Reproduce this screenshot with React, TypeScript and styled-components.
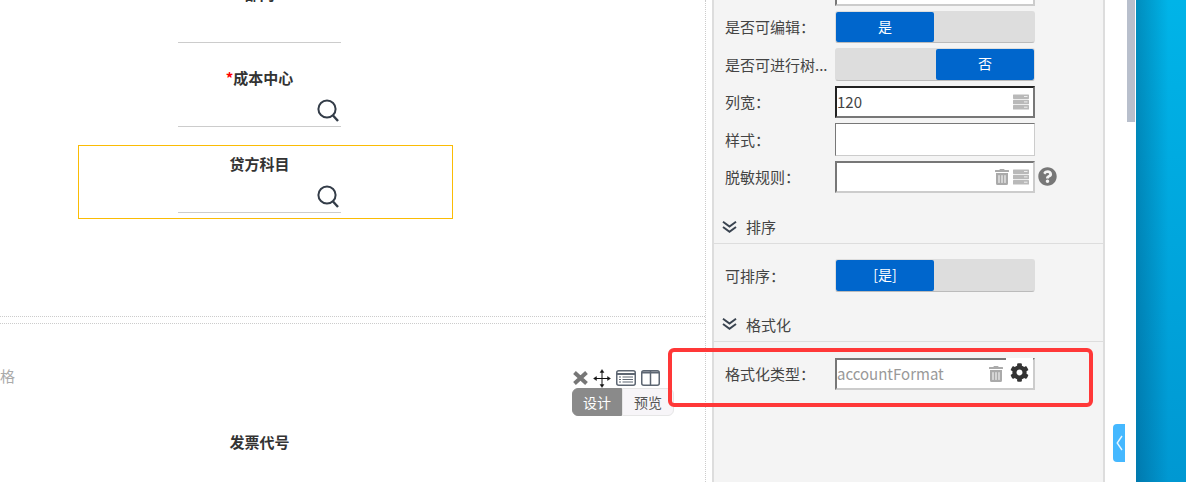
import React from "react";
import styled, { createGlobalStyle } from "styled-components";
import { FaCog, FaQuestionCircle, FaTrashAlt } from "react-icons/fa";

const GlobalStyle = createGlobalStyle`
  html, body { margin: 0; padding: 0; background: #fff; }
  body { font-family: "Noto Sans CJK SC", "Noto Sans", sans-serif; font-size: 15px; color: #444; }
`;

const Page = styled.div`
  position: relative;
  display: flex;
  width: 1186px;
  height: 482px;
  overflow: hidden;
`;

/* left: form canvas */
const Canvas = styled.div`
  width: 706px;
  flex: none;
  box-sizing: border-box;
  border-right: 1px dotted #ccc;
  margin-right: 6px;
`;

const FieldList = styled.div<{ $top: number }>`
  margin-top: ${(p) => p.$top}px;
  margin-left: 78px;
  width: 375px;
  & > :first-child { margin-top: 0; }
`;

const Field = styled.div<{ $selected?: boolean }>`
  box-sizing: border-box;
  height: ${(p) => (p.$selected ? 74 : 73)}px;
  margin-top: ${(p) => (p.$selected ? 13 : 11)}px;
  padding: 8px 111px 0 99px;
  border: 1px solid ${(p) => (p.$selected ? "#fbbc05" : "transparent")};
`;

const FieldLabel = styled.div`
  height: 20px;
  line-height: 20px;
  text-align: center;
  font-weight: 700;
  color: #333;
  white-space: nowrap;
`;

const Star = styled.span`
  color: #f00;
`;

const LineInput = styled.div`
  box-sizing: border-box;
  height: 39px;
  display: flex;
  align-items: flex-end;
  justify-content: flex-end;
  padding: 0 2px 4px 0;
  border-bottom: 1px solid #ccc;
`;

const Dividers = styled.div`
  height: 6px;
  margin-top: 97px;
  border-top: 1px dotted #ccc;
  border-bottom: 1px dotted #ccc;
`;

const DesignRow = styled.div`
  display: flex;
  justify-content: space-between;
  margin-top: 44px;
  padding-right: 31px;
`;

const CutText = styled.div`
  margin-top: -2px;
  height: 20px;
  line-height: 20px;
  color: #aaa;
`;

const DesignTools = styled.div`
  width: 102px;
`;

const IconRow = styled.div`
  display: flex;
  align-items: center;
  justify-content: space-between;
  height: 20px;
  margin: 0 14px 0 1px;
`;

const Tabs = styled.div`
  display: flex;
  height: 28px;
`;

const Tab = styled.div<{ $active?: boolean }>`
  box-sizing: border-box;
  flex: ${(p) => (p.$active ? "0 0 50px" : "1")};
  line-height: 27px;
  text-align: center;
  font-size: 14px;
  color: ${(p) => (p.$active ? "#fff" : "#555")};
  background: ${(p) => (p.$active ? "#8a8a8a" : "#f7f5f8")};
  border: 1px solid ${(p) => (p.$active ? "#8a8a8a" : "#e6e6e6")};
  border-radius: ${(p) => (p.$active ? "6px 0 0 6px" : "0 6px 6px 0")};
`;

/* middle: properties panel */
const Panel = styled.div`
  width: 393px;
  flex: none;
  box-sizing: border-box;
  height: 482px;
  background: #f4f4f4;
  border-left: 2px solid #ddd;
  border-right: 2px solid #ddd;
  padding-top: 1px;
`;

const Rows = styled.div<{ $top: number }>`
  display: flex;
  flex-direction: column;
  gap: 5px;
  margin-top: ${(p) => p.$top}px;
`;

const Row = styled.div`
  display: flex;
  align-items: center;
  height: 32.5px;
  padding-left: 11px;
`;

const RowLabel = styled.div`
  width: 110px;
  flex: none;
  white-space: nowrap;
  overflow: hidden;
  color: #444;
`;

const Toggle = styled.div`
  box-sizing: border-box;
  display: flex;
  gap: 2px;
  width: 200px;
  height: 32.5px;
  background: #ddd;
  border: 1px solid #ddd;
  border-bottom-color: #bbb;
  border-radius: 3px;
`;

const ToggleSide = styled.div<{ $on?: boolean }>`
  flex: 1;
  line-height: 29px;
  text-align: center;
  color: #fff;
  font-size: 14px;
  background: ${(p) => (p.$on ? "#0066cc" : "transparent")};
  border-radius: 2px;
`;

const InputBox = styled.div<{ $tone?: "inset" | "focus" | "thin" }>`
  box-sizing: border-box;
  display: flex;
  align-items: center;
  gap: 3px;
  width: 200px;
  height: 32.5px;
  padding: 0 4px 0 0;
  background: #fff;
  border-style: solid;
  border-width: ${(p) => (p.$tone === "thin" ? "1px" : "2px")};
  border-color: ${(p) =>
    p.$tone === "focus" ? "#222 #777 #777 #222" : "#777 #ccc #ccc #777"};
`;

const InputText = styled.div<{ $muted?: boolean }>`
  flex: 1;
  line-height: 24px;
  color: ${(p) => (p.$muted ? "#999" : "#444")};
`;

const GearButton = styled.div`
  display: flex;
  align-items: center;
  justify-content: center;
  flex: none;
  width: 27px;
  height: 30px;
  margin: -2px -4px 0 -1px;
  background: #fff;
  color: #333;
`;

const TrashWrap = styled.span`
  display: inline-flex;
  color: #aaa;
`;

const HelpWrap = styled.span`
  display: inline-flex;
  margin-left: 3px;
  color: #777;
`;

const SectionHeader = styled.div<{ $top: number }>`
  display: flex;
  align-items: center;
  gap: 9px;
  height: 34px;
  box-sizing: border-box;
  margin-top: ${(p) => p.$top}px;
  padding-left: 8px;
  border-bottom: 1px solid #ddd;
  color: #444;
`;

/* right: gutter and blue strip */
const Gutter = styled.div`
  position: relative;
  width: 31px;
  flex: none;
  background: #fff;
`;

const ScrollThumb = styled.div`
  position: absolute;
  top: 0;
  left: 22px;
  width: 8px;
  height: 122px;
  background: #b8bfcc;
`;

const CollapseTab = styled.div`
  position: absolute;
  top: 424px;
  left: 8px;
  width: 12px;
  height: 38px;
  display: flex;
  align-items: center;
  justify-content: center;
  background: #45b8ff;
  border-radius: 4px 0 0 4px;
`;

const BlueStrip = styled.div`
  flex: 1;
  background:
    linear-gradient(90deg, rgba(0, 50, 90, 0.3), rgba(0, 50, 90, 0) 65%),
    linear-gradient(180deg, #00b4e8, #0098d2);
`;

const Annotation = styled.div`
  position: absolute;
  left: 668px;
  top: 348px;
  width: 425px;
  height: 59px;
  box-sizing: border-box;
  border: 4px solid #ff3838;
  border-radius: 6px;
  pointer-events: none;
`;

const SearchIcon = () => (
  <svg width="22" height="23" viewBox="0 0 22 23" fill="none" stroke="#333c48">
    <circle cx="10" cy="10" r="8.6" strokeWidth="2" />
    <path d="M16 16.5 L21 22" strokeWidth="2.4" />
  </svg>
);

const StackIcon = () => (
  <svg width="16" height="16" viewBox="0 0 16 16">
    <rect x="0" y="0.5" width="16" height="4.4" rx="0.6" fill="#b9b9b9" />
    <rect x="0" y="5.8" width="16" height="4.4" rx="0.6" fill="#b9b9b9" />
    <rect x="0" y="11.1" width="16" height="4.4" rx="0.6" fill="#b9b9b9" />
    <rect x="11" y="2" width="3.5" height="1" fill="#eee" />
    <rect x="11" y="7.4" width="3.5" height="1" fill="#eee" />
    <rect x="11" y="12.7" width="3.5" height="1" fill="#eee" />
  </svg>
);

const DoubleChevron = () => (
  <svg width="15" height="12" viewBox="0 0 15 12" fill="none" stroke="#3a4450" strokeWidth="2">
    <path d="M1 0.8 L7.5 5.5 L14 0.8" />
    <path d="M1 6 L7.5 10.7 L14 6" />
  </svg>
);

const CloseIcon = () => (
  <svg width="15" height="14" viewBox="0 0 15 14" fill="none" stroke="#777" strokeWidth="4">
    <path d="M1.5 1.5 L13.5 12.5 M13.5 1.5 L1.5 12.5" />
  </svg>
);

const MoveIcon = () => (
  <svg width="18" height="19" viewBox="0 0 18 19" fill="#111" stroke="#111" strokeWidth="1">
    <path d="M9 2 V17 M2 9.5 H16" fill="none" />
    <path d="M9 0.5 L11 3.5 H7 Z M9 18.5 L11 15.5 H7 Z M0.5 9.5 L3.5 7.5 V11.5 Z M17.5 9.5 L14.5 7.5 V11.5 Z" strokeWidth="0.4" />
  </svg>
);

const ListIcon = () => (
  <svg width="20" height="16" viewBox="0 0 20 16" fill="none" stroke="#5d6672">
    <rect x="0.75" y="0.75" width="18.5" height="14.5" rx="2" strokeWidth="1.5" fill="#fff" />
    <path d="M1 4 H19" strokeWidth="2" />
    <path d="M3 7 H5 M6.5 7 H17 M3 9.5 H5 M6.5 9.5 H17 M3 12 H5 M6.5 12 H17" strokeWidth="1.2" />
  </svg>
);

const ColumnsIcon = () => (
  <svg width="19" height="16" viewBox="0 0 19 16" fill="none" stroke="#5d6672">
    <rect x="0.75" y="0.75" width="17.5" height="14.5" rx="2" strokeWidth="1.5" />
    <path d="M1 2.5 H18" strokeWidth="2" />
    <path d="M9.5 1 V15" strokeWidth="1.5" />
  </svg>
);

const Trash = () => (
  <TrashWrap>
    <FaTrashAlt size={16} />
  </TrashWrap>
);

const ChevronLeft = () => (
  <svg width="7" height="16" viewBox="0 0 7 16" fill="none" stroke="#e8f6ff" strokeWidth="1.4">
    <path d="M6 1 L1.2 8 L6 15" />
  </svg>
);

const App: React.FC = () => {
  return (
    <>
      <GlobalStyle />
      <Page>
        <Canvas>
          <FieldList $top={-25}>
            <Field>
              <FieldLabel>部门</FieldLabel>
              <LineInput />
            </Field>
            <Field>
              <FieldLabel>
                <Star>*</Star>成本中心
              </FieldLabel>
              <LineInput>
                <SearchIcon />
              </LineInput>
            </Field>
            <Field $selected>
              <FieldLabel>贷方科目</FieldLabel>
              <LineInput>
                <SearchIcon />
              </LineInput>
            </Field>
          </FieldList>
          <Dividers />
          <DesignRow>
            <CutText>格</CutText>
            <DesignTools>
              <IconRow>
                <CloseIcon />
                <MoveIcon />
                <ListIcon />
                <ColumnsIcon />
              </IconRow>
              <Tabs>
                <Tab $active>设计</Tab>
                <Tab>预览</Tab>
              </Tabs>
            </DesignTools>
          </DesignRow>
          <FieldList $top={7}>
            <Field>
              <FieldLabel>发票代号</FieldLabel>
              <LineInput />
            </Field>
          </FieldList>
        </Canvas>

        <Panel>
          <Rows $top={-28}>
            <Row>
              <RowLabel />
              <InputBox />
            </Row>
            <Row>
              <RowLabel>是否可编辑：</RowLabel>
              <Toggle>
                <ToggleSide $on>是</ToggleSide>
                <ToggleSide />
              </Toggle>
            </Row>
            <Row>
              <RowLabel>是否可进行树...</RowLabel>
              <Toggle>
                <ToggleSide />
                <ToggleSide $on>否</ToggleSide>
              </Toggle>
            </Row>
            <Row>
              <RowLabel>列宽：</RowLabel>
              <InputBox $tone="focus">
                <InputText>120</InputText>
                <StackIcon />
              </InputBox>
            </Row>
            <Row>
              <RowLabel>样式：</RowLabel>
              <InputBox $tone="thin" />
            </Row>
            <Row>
              <RowLabel>脱敏规则：</RowLabel>
              <InputBox>
                <InputText />
                <Trash />
                <StackIcon />
              </InputBox>
              <HelpWrap>
                <FaQuestionCircle size={19} />
              </HelpWrap>
            </Row>
          </Rows>

          <SectionHeader $top={17}>
            <DoubleChevron />
            <span>排序</span>
          </SectionHeader>
          <Rows $top={15}>
            <Row>
              <RowLabel>可排序：</RowLabel>
              <Toggle>
                <ToggleSide $on>[是]</ToggleSide>
                <ToggleSide />
              </Toggle>
            </Row>
          </Rows>

          <SectionHeader $top={16}>
            <DoubleChevron />
            <span>格式化</span>
          </SectionHeader>
          <Rows $top={16}>
            <Row>
              <RowLabel>格式化类型：</RowLabel>
              <InputBox>
                <InputText $muted>accountFormat</InputText>
                <Trash />
                <GearButton>
                  <FaCog size={19} />
                </GearButton>
              </InputBox>
            </Row>
          </Rows>
        </Panel>

        <Gutter>
          <ScrollThumb />
          <CollapseTab>
            <ChevronLeft />
          </CollapseTab>
        </Gutter>
        <BlueStrip />
        <Annotation />
      </Page>
    </>
  );
};

export default App;
